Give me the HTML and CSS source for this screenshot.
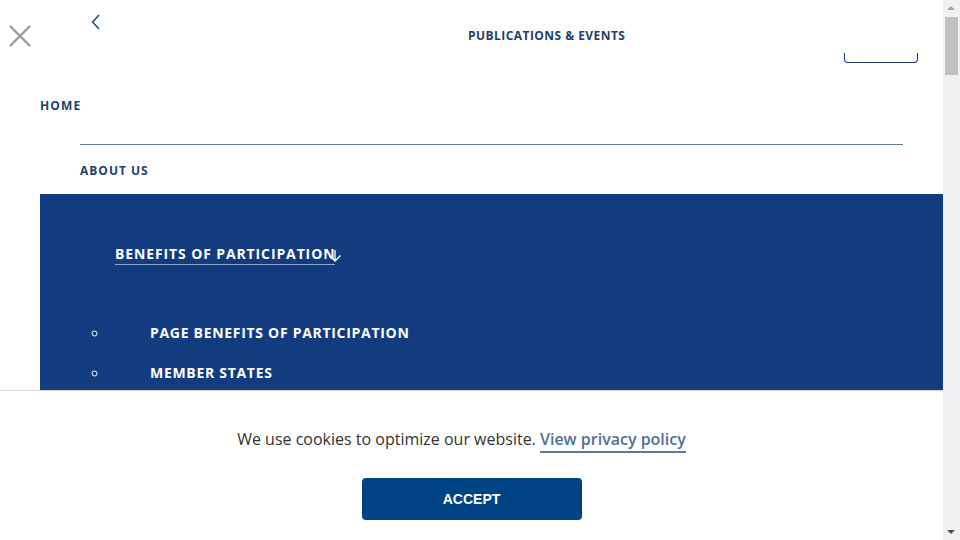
FILE: index.html
```html
<!DOCTYPE html>
<html lang="en">
<head>
    <meta charset="UTF-8">
    <meta name="viewport" content="width=device-width, initial-scale=1.0">
    <title>Menu</title>
    <link rel="stylesheet" href="styles.css">
</head>
<body>

<div class="menu">
    <div class="menu-top">
        <button class="close-btn" aria-label="Close">
            <svg width="22" height="22" viewBox="0 0 22 22"><path d="M1 1L21 21M21 1L1 21" stroke="#9a9a9a" stroke-width="2.4" fill="none"/></svg>
        </button>
        <button class="back-btn" aria-label="Back">
            <svg width="10" height="16" viewBox="0 0 10 16"><path d="M8 1L1.5 8L8 15" stroke="#1d3f6e" stroke-width="1.4" fill="none"/></svg>
        </button>
        <a class="top-link" href="#">PUBLICATIONS &amp; EVENTS</a>
        <span class="search-edge"></span>
    </div>

    <a class="nav-link home" href="#">HOME</a>

    <div class="sub">
        <a class="nav-link about" href="#">ABOUT US</a>
    </div>

    <div class="active-block">
        <a class="active-title" href="#">BENEFITS OF PARTICIPATION<svg class="arrow" width="14" height="14" viewBox="0 0 14 14"><path d="M7 1V12M1.5 6.5L7 12L12.5 6.5" stroke="#fff" stroke-width="1.3" fill="none"/></svg></a>
        <ul class="sub-list">
            <li><a href="#">PAGE BENEFITS OF PARTICIPATION</a></li>
            <li><a href="#">MEMBER STATES</a></li>
            <li><a href="#">PARTICIPATION PROCESS</a></li>
        </ul>
    </div>
</div>

<div class="cookie-bar">
    <p>We use cookies to optimize our website. <a href="#">View privacy policy</a></p>
    <button class="accept">ACCEPT</button>
</div>

<div class="scrollbar">
    <span class="scroll-up"></span>
    <span class="scroll-thumb"></span>
    <span class="scroll-down"></span>
</div>

</body>
</html>
```

FILE: styles.css
```css
html,
body {
    height: 100%;
    overflow: hidden;
}

body {
    margin: 0;
    background: #fff;
    font-family: "Open Sans", "Liberation Sans", sans-serif;
    color: #1d3f6e;
}

a {
    text-decoration: none;
}

.menu {
    padding: 0 17px 0 40px;
}

.menu-top {
    position: relative;
    height: 90px;
}

.close-btn,
.back-btn {
    position: absolute;
    border: none;
    background: none;
    padding: 0;
    cursor: pointer;
}

.close-btn {
    left: -31px;
    top: 25px;
}

.back-btn {
    left: 51px;
    top: 14px;
}

.top-link {
    position: absolute;
    left: 428px;
    top: 27px;
    font-size: 12px;
    font-weight: 700;
    letter-spacing: 0.45px;
    color: #1d3f6e;
}

.search-edge {
    position: absolute;
    left: 804px;
    top: 53px;
    width: 72px;
    height: 9px;
    border: 1px solid #1d3f6e;
    border-top: none;
    border-radius: 0 0 4px 4px;
    background: #fff;
}

.nav-link {
    display: block;
    font-size: 12px;
    font-weight: 700;
    letter-spacing: 1.15px;
    color: #1d3f6e;
}

.home {
    line-height: 30px;
    padding: 1px 0 23px;
}

.sub {
    margin: 0 40px;
    border-top: 1px solid #5d7896;
    padding: 16px 0 13px;
}

.about {
    line-height: 20px;
    letter-spacing: 1px;
}

.active-block {
    background: #133c80;
    padding: 48px 0 20px;
}

.active-title {
    display: inline-block;
    position: relative;
    margin-left: 75px;
    font-size: 14px;
    font-weight: 700;
    letter-spacing: 0.88px;
    color: #fff;
    line-height: 20px;
    border-bottom: 1px solid #8fa3c4;
}

.arrow {
    position: absolute;
    right: -7px;
    top: 5px;
}

.sub-list {
    list-style: circle;
    color: #fff;
    margin: 57px 0 0;
    padding: 0 0 0 69px;
}

.sub-list li {
    line-height: 20px;
    margin-bottom: 19px;
    padding-left: 41px;
}

.sub-list li::marker {
    font-size: 15px;
}

.sub-list a {
    font-size: 14px;
    font-weight: 700;
    letter-spacing: 0.7px;
    color: #fff;
}

.cookie-bar {
    position: fixed;
    left: 0;
    right: 17px;
    bottom: 0;
    height: 149px;
    background: #fff;
    border-top: 1px solid #d8d8d8;
    text-align: center;
}

.cookie-bar p {
    margin: 36px 0 27px;
    padding-right: 20px;
    font-size: 16px;
    line-height: 24px;
    color: #333;
}

.cookie-bar p a {
    color: #4e7095;
    font-weight: 600;
    border-bottom: 2px solid #5d7896;
    padding-bottom: 1px;
}

.accept {
    width: 220px;
    height: 42px;
    border: none;
    border-radius: 4px;
    background: #004385;
    color: #fff;
    font-family: "Liberation Sans", Arial, sans-serif;
    font-size: 14px;
    font-weight: 700;
    cursor: pointer;
}

.scrollbar {
    position: fixed;
    top: 0;
    right: 0;
    bottom: 0;
    width: 17px;
    background: #f1f1f1;
}

.scroll-thumb {
    position: absolute;
    left: 2px;
    right: 2px;
    top: 17px;
    height: 58px;
    background: #c1c1c1;
}

.scroll-up,
.scroll-down {
    position: absolute;
    left: 4px;
    width: 0;
    height: 0;
    border-left: 4px solid transparent;
    border-right: 4px solid transparent;
}

.scroll-up {
    top: 6px;
    border-bottom: 4px solid #a3a3a3;
}

.scroll-down {
    bottom: 6px;
    border-top: 4px solid #505050;
}
```
